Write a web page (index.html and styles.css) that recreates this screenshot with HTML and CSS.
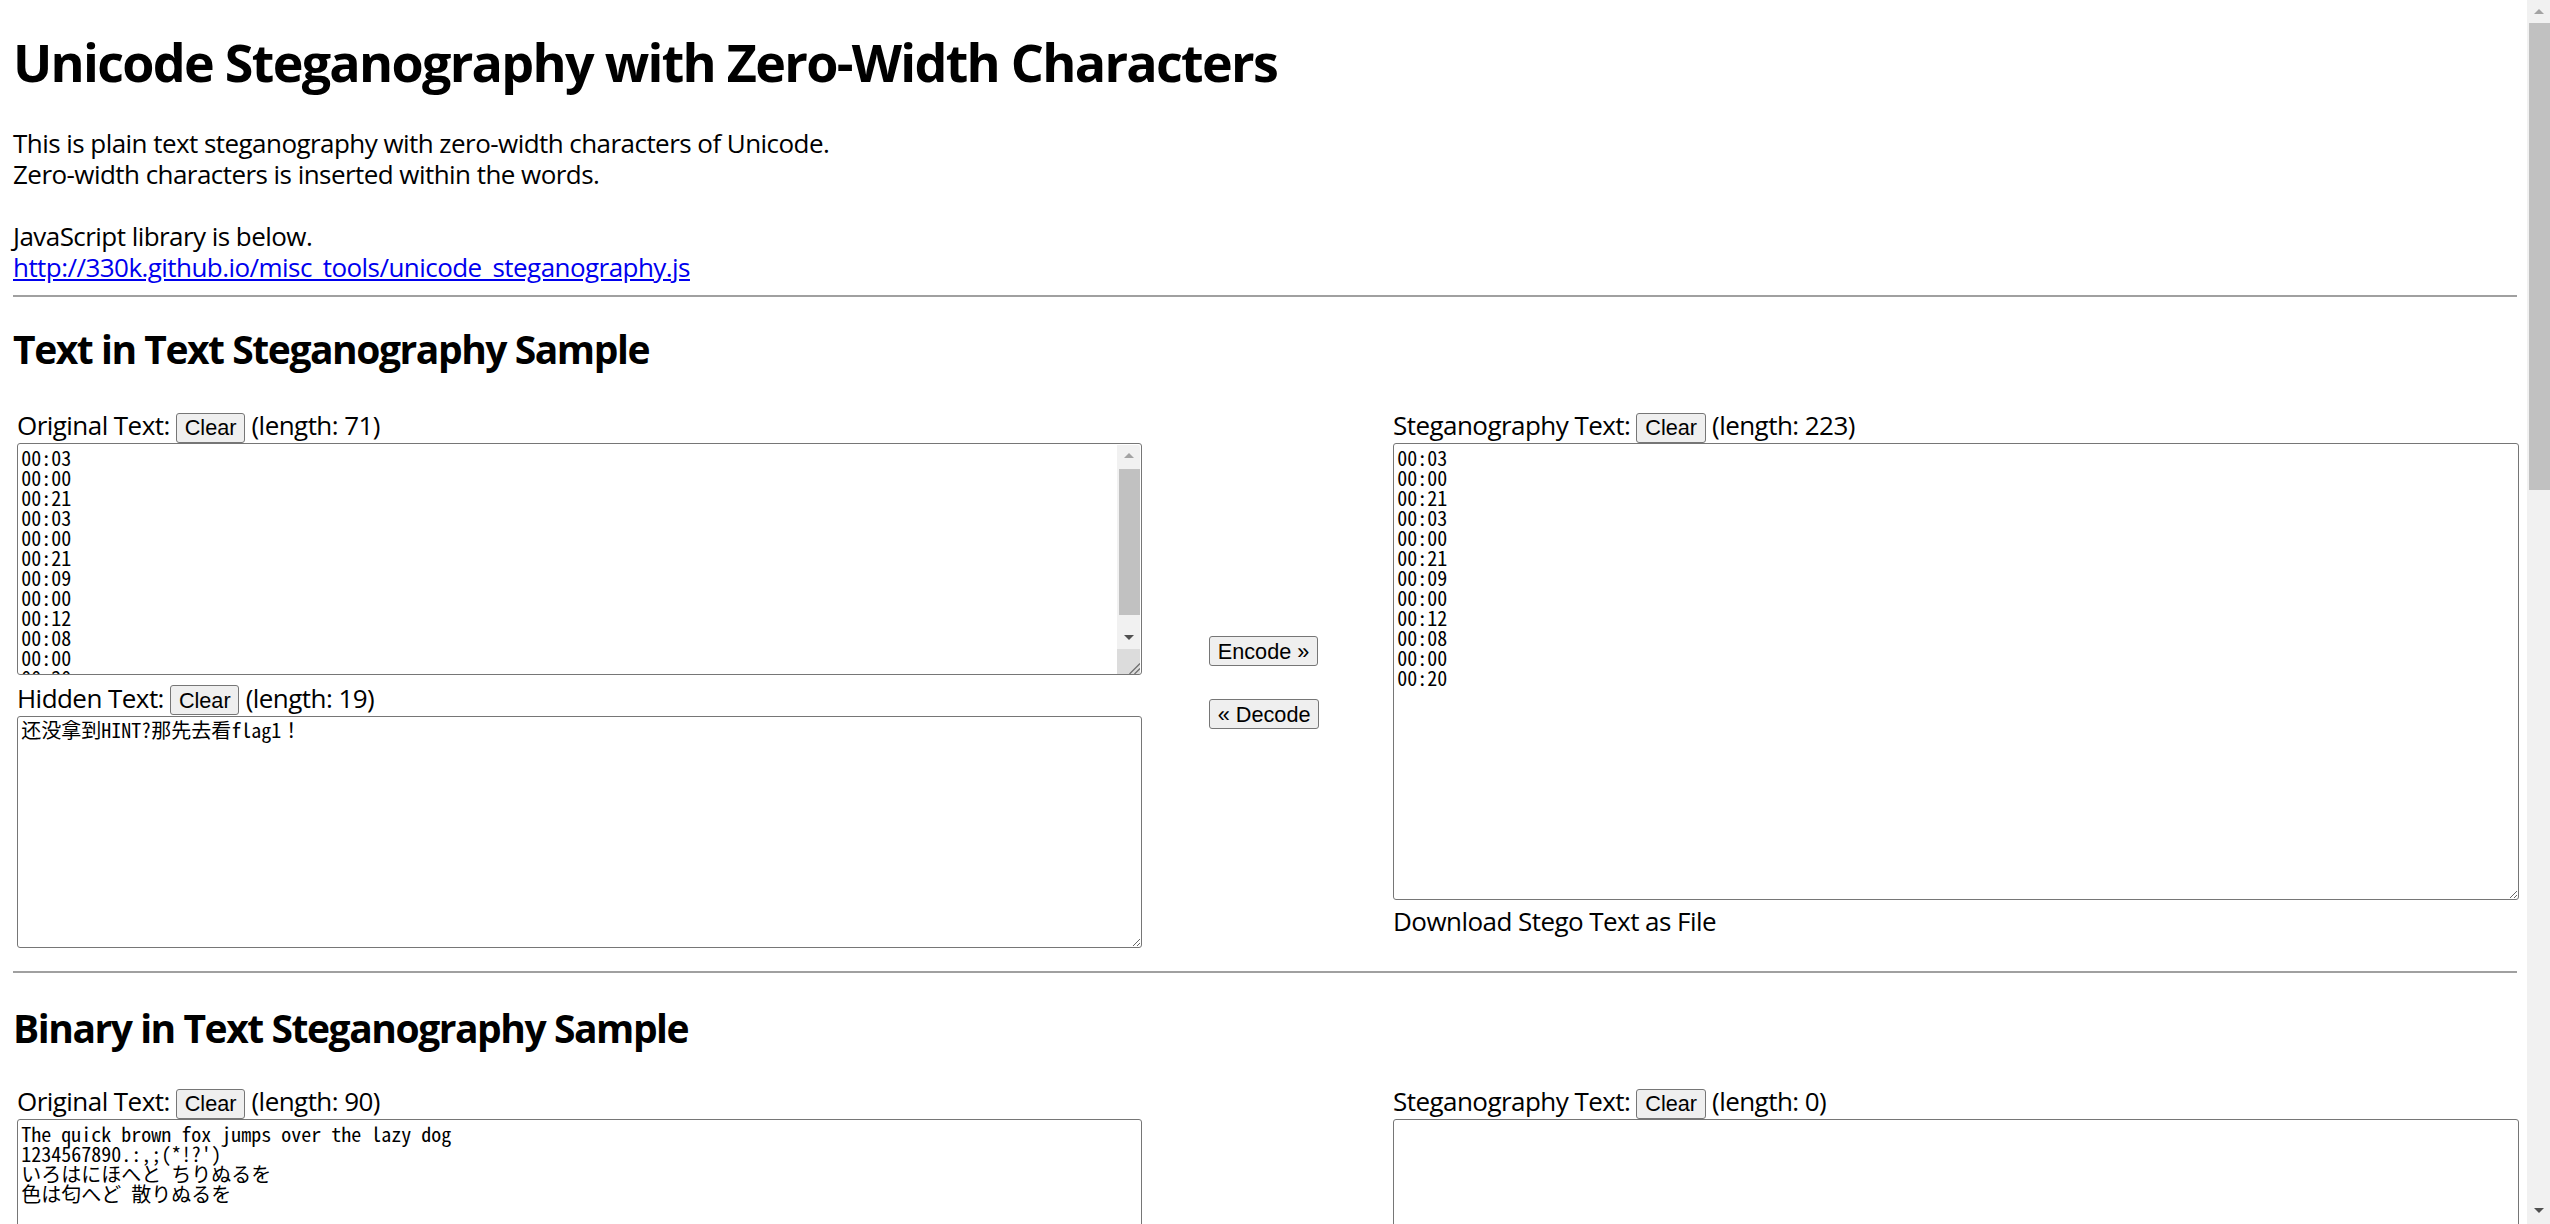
FILE: index.html
```html
<!DOCTYPE html>
<html lang="en">
<head>
<meta charset="utf-8">
<title>Unicode Steganography with Zero-Width Characters</title>
<link rel="stylesheet" href="styles.css">
</head>
<body>
<div class="window">
  <main class="page">
    <h1 class="title">Unicode Steganography with Zero-Width Characters</h1>
    <p class="intro">This is plain text steganography with zero-width characters of Unicode.<br>Zero-width characters is inserted within the words.<br><br>JavaScript library is below.<br><a class="lib-link" href="#">http://330k.github.io/misc_tools/unicode_steganography.js</a></p>
    <hr class="rule">

    <h2 class="section-title">Text in Text Steganography Sample</h2>
    <div class="stego-grid">
      <div class="col">
        <div class="field-label">Original Text: <button class="btn">Clear</button> (length: 71)</div>
        <div class="ta-wrap">
          <textarea class="ta ta-short ta-scrolling">00:03
00:00
00:21
00:03
00:00
00:21
00:09
00:00
00:12
00:08
00:00
00:20</textarea>
          <div class="vscroll">
            <div class="vs-btn"><span class="arrow-up"></span></div>
            <div class="vs-thumb"></div>
            <div class="vs-fill"></div>
            <div class="vs-btn"><span class="arrow-down"></span></div>
            <div class="vs-corner">
              <svg class="grip" width="23" height="25" viewBox="0 0 23 25"><path d="M23 14.5 L12.5 25 M23 19.5 L17.5 25" stroke="#6f6f6f" stroke-width="1.3" fill="none"/></svg>
            </div>
          </div>
        </div>
        <div class="field-label field-gap">Hidden Text: <button class="btn">Clear</button> (length: 19)</div>
        <textarea class="ta ta-short">还没拿到HINT?那先去看flag1！</textarea>
      </div>
      <div class="col col-actions">
        <button class="btn">Encode »</button>
        <button class="btn">« Decode</button>
      </div>
      <div class="col">
        <div class="field-label">Steganography Text: <button class="btn">Clear</button> (length: 223)</div>
        <textarea class="ta ta-tall">00:03
00:00
00:21
00:03
00:00
00:21
00:09
00:00
00:12
00:08
00:00
00:20</textarea>
        <div class="download">Download Stego Text as File</div>
      </div>
    </div>
    <hr class="rule rule-second">

    <h2 class="section-title section-title-second">Binary in Text Steganography Sample</h2>
    <div class="stego-grid stego-grid-second">
      <div class="col">
        <div class="field-label">Original Text: <button class="btn">Clear</button> (length: 90)</div>
        <textarea class="ta ta-short">The quick brown fox jumps over the lazy dog
1234567890.:,;(*!?')
いろはにほへと ちりぬるを
色は匂へど 散りぬるを</textarea>
      </div>
      <div class="col col-actions"></div>
      <div class="col">
        <div class="field-label">Steganography Text: <button class="btn">Clear</button> (length: 0)</div>
        <textarea class="ta ta-tall"></textarea>
      </div>
    </div>
  </main>
  <div class="page-scrollbar">
    <div class="sb-btn"><span class="arrow-up"></span></div>
    <div class="sb-thumb"></div>
    <div class="sb-fill"></div>
    <div class="sb-btn sb-btn-bottom"><span class="arrow-down"></span></div>
  </div>
</div>
</body>
</html>
```

FILE: styles.css
```css
html, body {
  margin: 0;
  padding: 0;
  height: 100%;
  background: #ffffff;
}

body {
  font-family: "Open Sans", "Noto Sans", sans-serif;
  font-size: 26px;
  color: #000000;
  overflow: hidden;
}

.window {
  display: flex;
  height: 100vh;
  overflow: hidden;
}

.page {
  flex: 1;
  min-width: 0;
  padding: 0 10px 0 13px;
  overflow: hidden;
}

.title {
  margin: 32px 0 0;
  font-size: 52px;
  line-height: 60px;
  font-weight: 700;
  letter-spacing: -1.7px;
}

.intro {
  margin: 35.7px 0 0;
  line-height: 31px;
  letter-spacing: -0.55px;
}

.lib-link {
  color: #0000ee;
  text-decoration: underline;
}

.rule {
  margin: 12px 0 0;
  height: 0;
  border: 0;
  border-top: 2px solid #a0a0a0;
}

.rule-second {
  margin-top: 23px;
}

.section-title {
  margin: 29px 0 0;
  font-size: 39px;
  line-height: 46px;
  font-weight: 700;
  letter-spacing: -1.45px;
}

.section-title-second {
  margin-top: 32px;
}

.stego-grid {
  display: grid;
  grid-template-columns: 1125px 251px 1126px;
  margin: 38.5px 0 0 4px;
}

.stego-grid-second {
  margin-top: 35.5px;
}

.col {
  display: flex;
  flex-direction: column;
  align-items: stretch;
}

.col-actions {
  justify-content: center;
  align-items: flex-start;
  gap: 33px;
  padding: 8px 0 0 67px;
}

.field-label {
  line-height: 31px;
  letter-spacing: -0.55px;
  white-space: nowrap;
}

.field-gap {
  margin-top: 7.2px;
}

.btn {
  display: inline-block;
  font-family: "Liberation Sans", Arial, sans-serif;
  font-size: 21.67px;
  line-height: 25px;
  letter-spacing: 0;
  color: #000000;
  background: #efefef;
  border: 1.6px solid #767676;
  border-radius: 3px;
  padding: 1.5px 7.8px;
  margin: 0;
}

.ta-wrap {
  position: relative;
  margin-top: 0.7px;
}

.ta {
  display: block;
  box-sizing: border-box;
  width: 100%;
  margin: 0.7px 0 0;
  padding: 3.25px;
  border: 1.6px solid #767676;
  border-radius: 3px;
  background: #ffffff;
  color: #000000;
  font-family: "Noto Sans Mono CJK JP", "Noto Sans Mono CJK SC", "Liberation Mono", monospace;
  font-size: 20px;
  line-height: 20px;
  resize: both;
  overflow: hidden;
}

.ta-wrap .ta {
  margin: 0;
}

.ta-short {
  height: 232px;
}

.ta-tall {
  height: 457px;
}

.vscroll {
  position: absolute;
  top: 1.6px;
  right: 1.6px;
  bottom: 1.6px;
  width: 23px;
  display: flex;
  flex-direction: column;
  background: #f1f1f1;
  border-radius: 0 2px 2px 0;
}

.vs-btn {
  height: 22px;
  display: flex;
  align-items: center;
  justify-content: center;
}

.vs-thumb {
  height: 146px;
  margin: 2px 0 0 2px;
  background: #c1c1c1;
}

.vs-fill {
  flex: 1;
}

.vs-corner {
  height: 25px;
  background: #dcdcdc;
}

.grip {
  display: block;
}

.arrow-up {
  width: 0;
  height: 0;
  border-left: 5px solid transparent;
  border-right: 5px solid transparent;
  border-bottom: 5px solid #a3a3a3;
}

.arrow-down {
  width: 0;
  height: 0;
  border-left: 5px solid transparent;
  border-right: 5px solid transparent;
  border-top: 5px solid #505050;
}

.download {
  margin-top: 5.4px;
  line-height: 31px;
  letter-spacing: -0.55px;
}

.page-scrollbar {
  flex: 0 0 23px;
  display: flex;
  flex-direction: column;
  background: #f1f1f1;
}

.sb-btn {
  height: 23px;
  display: flex;
  align-items: center;
  justify-content: center;
}

.sb-btn-bottom {
  height: 28px;
}

.sb-thumb {
  height: 467px;
  margin-left: 2px;
  background: #c1c1c1;
}

.sb-fill {
  flex: 1;
}
```
